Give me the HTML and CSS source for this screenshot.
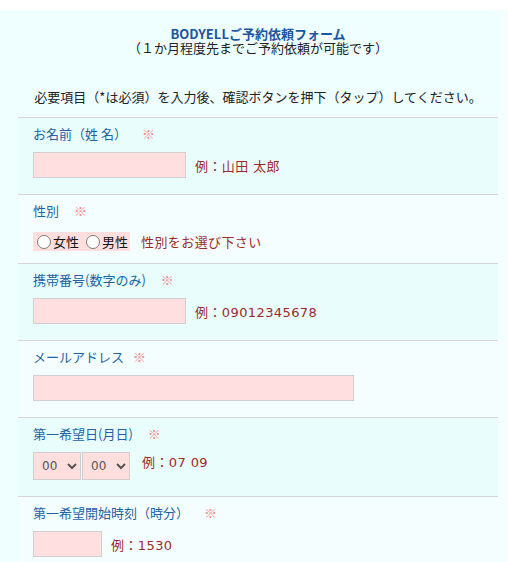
FILE: index.html
```html
<!DOCTYPE html>
<html lang="ja">
<head>
    <meta charset="UTF-8">
    <meta name="viewport" content="width=device-width, initial-scale=1.0">
    <title>BODYELLご予約依頼フォーム</title>
    <link rel="stylesheet" href="styles.css">
</head>
<body>
    <div class="page">
        <div class="form-wrap">
            <div class="inner">
                <div class="header">
                    <p class="title">BODYELLご予約依頼フォーム</p>
                    <p class="subtitle">（１か月程度先までご予約依頼が可能です）</p>
                </div>

                <p class="lead">必要項目（*は必須）を入力後、確認ボタンを押下（タップ）してください。</p>

                <!-- name -->
                <div class="row odd">
                    <div class="label">お名前（姓 名）<span class="req">※</span></div>
                    <div class="field">
                        <input type="text" class="text w-name">
                        <span class="hint">例：山田 太郎</span>
                    </div>
                </div>

                <!-- gender -->
                <div class="row even row-gender">
                    <div class="label">性別<span class="req">※</span></div>
                    <div class="field">
                        <span class="radio-box">
                            <label><input type="radio" name="sex">女性</label>
                            <label><input type="radio" name="sex">男性</label>
                        </span>
                        <span class="hint">性別をお選び下さい</span>
                    </div>
                </div>

                <!-- phone -->
                <div class="row odd">
                    <div class="label">携帯番号(数字のみ)<span class="req">※</span></div>
                    <div class="field">
                        <input type="text" class="text w-name">
                        <span class="hint">例：09012345678</span>
                    </div>
                </div>

                <!-- mail -->
                <div class="row even">
                    <div class="label">メールアドレス<span class="req near">※</span></div>
                    <div class="field">
                        <input type="text" class="text w-mail">
                    </div>
                </div>

                <!-- date -->
                <div class="row odd row-date">
                    <div class="label">第一希望日(月日)<span class="req">※</span></div>
                    <div class="field">
                        <span class="selects">
                            <select><option>00</option></select><select><option>00</option></select>
                        </span>
                        <span class="hint">例：07 09</span>
                    </div>
                </div>

                <!-- time -->
                <div class="row even">
                    <div class="label">第一希望開始時刻（時分）<span class="req">※</span></div>
                    <div class="field">
                        <input type="text" class="text w-time">
                        <span class="hint">例：1530</span>
                    </div>
                </div>
            </div>
        </div>
    </div>
</body>
</html>
```

FILE: styles.css
```css
body {
    margin: 0;
    background-color: #fff;
    font-family: "Noto Sans CJK JP", "Noto Sans", sans-serif;
    font-size: 13px;
    color: #333;
}
p {
    margin: 0;
}
.page {
    margin-top: 10px;
    background-color: #f5fefe;
    min-height: 560px;
}
.form-wrap {
    width: 498px;
    background-color: #effefe;
    min-height: 560px;
}
.inner {
    margin-left: 18px;
}
.header {
    padding-top: 16px;
    text-align: center;
}
.title {
    line-height: 15px;
    font-weight: bold;
    color: #1c56a0;
}
.subtitle {
    line-height: 13px;
    color: #222;
}
.lead {
    margin-top: 33px;
    margin-bottom: 10px;
    line-height: 20px;
    text-align: center;
    color: #222;
}
.row {
    border-top: 1px solid #d6d6d6;
    padding: 6px 0 16px 15px;
}
.row.odd {
    background-color: #e9fdfd;
}
.row.even {
    background-color: #f5fefe;
}
.label {
    line-height: 20px;
    color: #2262a2;
}
.req {
    color: #f08a8a;
    margin-left: 15px;
}
.req.near {
    margin-left: 9px;
}
.field {
    display: flex;
    align-items: center;
    margin-top: 8px;
}
.text {
    box-sizing: border-box;
    height: 26px;
    margin: 0;
    padding: 2px 4px;
    border: 1px solid #cfcfcf;
    background-color: #ffdfdf;
    font-family: inherit;
    font-size: 13px;
}
.w-name { width: 153px; }
.w-mail { width: 321px; }
.w-time { width: 69px; }
.hint {
    margin-left: 9px;
    font-family: "DejaVu Sans", "Noto Sans CJK JP", sans-serif;
    letter-spacing: 0.4px;
    color: #9a2b2b;
}
.row-gender {
    padding-bottom: 12px;
}
.row-gender .field {
    margin-top: 11px;
}
.radio-box {
    display: inline-flex;
    flex-shrink: 0;
    align-items: center;
    height: 19px;
    padding-right: 2px;
    white-space: nowrap;
    background-color: #ffdede;
    color: #111;
}
.radio-box label {
    display: inline-flex;
    align-items: center;
}
.radio-box label + label {
    margin-left: 7px;
}
.radio-box input {
    appearance: none;
    flex-shrink: 0;
    box-sizing: border-box;
    width: 14px;
    height: 14px;
    margin: 0 2px 0 4px;
    border: 1px solid #7a7a7a;
    border-radius: 50%;
    background-color: #fff;
}
.radio-box label + label input {
    margin-left: 0;
}
.row-date .hint,
.row-gender .hint {
    margin-left: 11px;
}
.row-date .field {
    align-items: flex-start;
}
.row-date .hint {
    line-height: 22px;
}
.selects {
    display: inline-flex;
    flex-shrink: 0;
}
.selects select {
    box-sizing: border-box;
    width: 48px;
    height: 28px;
    margin: 0 1px 0 0;
    padding: 0 0 0 4px;
    border: 1px solid #cfcfcf;
    background-color: #ffdede;
    color: #555;
    font-family: "DejaVu Sans", sans-serif;
    font-size: 12px;
}
```
